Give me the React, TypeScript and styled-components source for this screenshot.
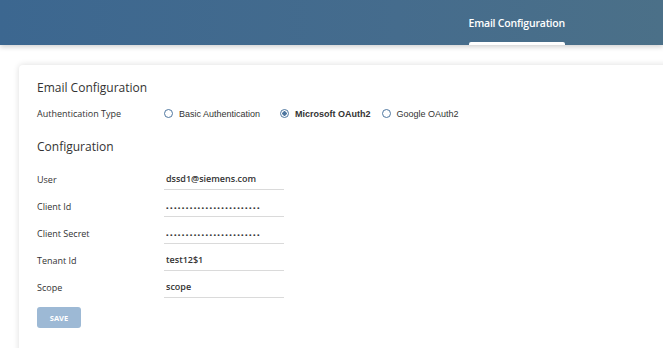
import styled, { createGlobalStyle } from 'styled-components';

const GlobalStyle = createGlobalStyle`
  html, body {
    margin: 0;
    padding: 0;
    background: #ffffff;
    overflow: hidden;
  }
  body {
    font-family: 'Open Sans', 'Liberation Sans', sans-serif;
    color: #333;
  }
`;

const authTypes = [
  { label: 'Basic Authentication', checked: false },
  { label: 'Microsoft OAuth2', checked: true },
  { label: 'Google OAuth2', checked: false },
];

const fields = [
  { label: 'User', value: 'dssd1@siemens.com', secret: false },
  { label: 'Client Id', value: '........................', secret: true },
  { label: 'Client Secret', value: '........................', secret: true },
  { label: 'Tenant Id', value: 'test12$1', secret: false },
  { label: 'Scope', value: 'scope', secret: false },
];

export default function App() {
  return (
    <>
      <GlobalStyle />
      <Page>
        <Header>
          <Tab>
            Email Configuration
            <TabLine />
          </Tab>
        </Header>
        <Card>
          <Title>Email Configuration</Title>
          <AuthRow>
            <Label>Authentication Type</Label>
            <RadioGroup>
              {authTypes.map((t) => (
                <RadioItem key={t.label} $checked={t.checked}>
                  <RadioCircle $checked={t.checked} />
                  {t.label}
                </RadioItem>
              ))}
            </RadioGroup>
          </AuthRow>
          <SubTitle>Configuration</SubTitle>
          <Form>
            {fields.map((f) => (
              <FieldRow key={f.label}>
                <Label>{f.label}</Label>
                <Input readOnly value={f.value} $secret={f.secret} />
              </FieldRow>
            ))}
          </Form>
          <SaveButton disabled>SAVE</SaveButton>
        </Card>
      </Page>
    </>
  );
}

const Page = styled.div`
  width: 663px;
  height: 348px;
  overflow: hidden;
  background: #ffffff;
`;

const Header = styled.header`
  height: 45px;
  display: flex;
  justify-content: flex-end;
  padding-right: 98px;
  background: linear-gradient(90deg, #3c6790 0%, #456c8d 60%, #4b7088 100%);
  box-shadow: 0 2px 5px rgba(0, 0, 0, 0.18);
  position: relative;
  z-index: 1;
`;

const Tab = styled.div`
  display: flex;
  flex-direction: column;
  justify-content: flex-end;
  align-items: center;
  gap: 12px;
  color: #ffffff;
  font-size: 10.5px;
  font-weight: 600;
  letter-spacing: -0.2px;
`;

const TabLine = styled.div`
  width: 96px;
  height: 3px;
  border-radius: 2px 2px 0 0;
  background: #ffffff;
`;

const Card = styled.section`
  margin: 20px -10px 0 19px;
  padding: 14px 18px 40px;
  background: #ffffff;
  border-radius: 4px;
  box-shadow: 0 0 6px rgba(0, 0, 0, 0.14);
  height: 300px;
`;

const Title = styled.h2`
  margin: 0 0 11px;
  font-size: 12px;
  font-weight: 500;
  color: #333;
`;

const SubTitle = styled.h3`
  margin: 18px 0 18px;
  font-size: 12px;
  font-weight: 500;
  color: #333;
`;

const AuthRow = styled.div`
  display: flex;
  align-items: center;
`;

const Label = styled.span`
  width: 127px;
  flex-shrink: 0;
  font-size: 9px;
  color: #333;
`;

const RadioGroup = styled.div`
  display: flex;
  align-items: center;
  gap: 11px;
`;

const RadioItem = styled.label<{ $checked: boolean }>`
  display: flex;
  align-items: center;
  gap: 6px;
  font-family: 'Liberation Sans', Arial, sans-serif;
  font-size: 9px;
  font-weight: ${({ $checked }) => ($checked ? 700 : 400)};
  color: #333;
  margin-right: ${({ $checked }) => ($checked ? '0' : '9px')};
`;

const RadioCircle = styled.span<{ $checked: boolean }>`
  width: 7px;
  height: 7px;
  border-radius: 50%;
  border: 1.2px solid #4f77a0;
  background: ${({ $checked }) =>
    $checked ? 'radial-gradient(circle, #4f77a0 0 2px, #fff 2.4px)' : '#fff'};
`;

const Form = styled.div`
  display: flex;
  flex-direction: column;
  gap: 7px;
`;

const FieldRow = styled.div`
  display: flex;
  align-items: flex-start;
  height: 20px;
`;

const Input = styled.input<{ $secret: boolean }>`
  width: 120px;
  box-sizing: border-box;
  height: 21px;
  margin-top: -4px;
  padding: 0 2px 2px;
  border: none;
  border-bottom: 1px solid #dadada;
  outline: none;
  background: transparent;
  font-family: 'Open Sans', sans-serif;
  font-size: 9px;
  font-weight: ${({ $secret }) => ($secret ? 800 : 600)};
  letter-spacing: ${({ $secret }) => ($secret ? '1.35px' : '0')};
  color: #333;
`;

const SaveButton = styled.button`
  margin-top: 6px;
  width: 44px;
  height: 21px;
  border: none;
  border-radius: 3px;
  background: #9db9d5;
  color: #ffffff;
  font-family: 'Open Sans', sans-serif;
  font-size: 7.5px;
  font-weight: 700;
  padding: 0;
`;
